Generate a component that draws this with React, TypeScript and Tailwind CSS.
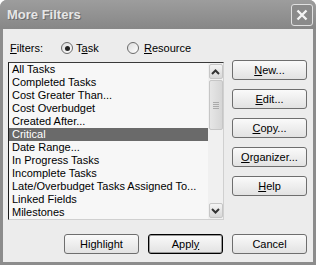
import React from "react";

const items = [
  "All Tasks",
  "Completed Tasks",
  "Cost Greater Than...",
  "Cost Overbudget",
  "Created After...",
  "Critical",
  "Date Range...",
  "In Progress Tasks",
  "Incomplete Tasks",
  "Late/Overbudget Tasks Assigned To...",
  "Linked Fields",
  "Milestones",
];

function Btn({ children, def }: { children: React.ReactNode; def?: boolean }) {
  return (
    <div
      className={
        "w-[75px] h-[20px] flex items-center justify-center rounded-[3px] text-[11px] text-black bg-gradient-to-b from-[#fafafa] to-[#e2e2e2] " +
        (def
          ? "border border-black shadow-[inset_0_0_0_1px_#9a9a9a]"
          : "border border-[#6e6e6e]")
      }
    >
      {children}
    </div>
  );
}

function Radio({ checked }: { checked?: boolean }) {
  return (
    <div className="w-[12px] h-[12px] rounded-full border border-[#6a6a6a] bg-gradient-to-br from-[#dcdcdc] to-white flex items-center justify-center">
      {checked && <div className="w-[5px] h-[5px] rounded-full bg-[#222]" />}
    </div>
  );
}

function Arrow({ up }: { up?: boolean }) {
  return (
    <div className="w-[14px] h-[15px] rounded-[2px] border border-[#c6c6c6] bg-gradient-to-b from-[#f4f4f4] to-[#d8d8d8] flex items-center justify-center">
      <svg width="9" height="6" viewBox="0 0 9 6">
        <path
          d={up ? "M1 5 L4.5 1.5 L8 5" : "M1 1 L4.5 4.5 L8 1"}
          fill="none"
          stroke="#333"
          strokeWidth="2"
        />
      </svg>
    </div>
  );
}

export default function App() {
  return (
    <div
      className="w-[316px] h-[265px] bg-[#8c8c8c] flex flex-col rounded-t-[7px] overflow-hidden"
      style={{ fontFamily: '"Liberation Sans", Arial, sans-serif' }}
    >
      <div className="h-[29px] shrink-0 flex items-center justify-between pl-[7px] pr-[3px] bg-gradient-to-b from-[#9d9d9d] to-[#878787]">
        <span className="text-[13px] font-bold text-[#e6e6e6] [text-shadow:1px_1px_0_#6a6a6a]">
          More Filters
        </span>
        <div className="w-[22px] h-[22px] rounded-[3px] border border-[#e0e0e0] bg-[#8a8a8a] flex items-center justify-center">
          <svg width="12" height="12" viewBox="0 0 12 12">
            <path d="M1.5 1.5 L10.5 10.5 M10.5 1.5 L1.5 10.5" stroke="#f4f4f4" strokeWidth="2.4" />
          </svg>
        </div>
      </div>
      <div className="flex-1 mx-[3px] mb-[3px] bg-[#ececec] flex flex-col pl-[5px] text-[11px] text-black">
        <div className="h-[14px] mt-[12px] flex items-center">
          <span className="ml-[2px] w-[51px]">
            <span className="underline">F</span>ilters:
          </span>
          <Radio checked />
          <span className="ml-[3px] w-[51px]">
            T<span className="underline">a</span>sk
          </span>
          <Radio />
          <span className="ml-[5px]">
            <span className="underline">R</span>esource
          </span>
        </div>
        <div className="flex mt-[5px]">
          <div className="mt-[2px] w-[216px] h-[158px] bg-[#f7f7f7] border border-t-[#3a3a3a] border-l-[#1a1a1a] border-r-[#d0d0d0] border-b-[#d0d0d0] flex">
            <div className="flex-1 flex flex-col">
              {items.map((t) => (
                <div
                  key={t}
                  className={
                    "h-[13px] leading-[13px] pl-[3px] whitespace-nowrap " +
                    (t === "Critical" ? "bg-[#6a6a6a] text-white" : "")
                  }
                >
                  {t}
                </div>
              ))}
            </div>
            <div className="w-[15px] h-full bg-[#f0f0f0] flex flex-col items-center pt-[1px] pb-[1px]">
              <Arrow up />
              <div className="w-[14px] h-[50px] mt-[1px] rounded-[2px] border border-[#c6c6c6] bg-gradient-to-r from-[#e6e6e6] to-[#d6d6d6] flex flex-col items-center justify-center gap-[1px]">
                <div className="w-[6px] h-[1px] bg-[#aaa]" />
                <div className="w-[6px] h-[1px] bg-[#aaa]" />
                <div className="w-[6px] h-[1px] bg-[#aaa]" />
                <div className="w-[6px] h-[1px] bg-[#aaa]" />
              </div>
              <div className="flex-1" />
              <Arrow />
            </div>
          </div>
          <div className="ml-[8px] flex flex-col gap-[9px]">
            <Btn>
              <span className="underline">N</span>ew...
            </Btn>
            <Btn>
              <span className="underline">E</span>dit...
            </Btn>
            <Btn>
              <span className="underline">C</span>opy...
            </Btn>
            <Btn>
              <span className="underline">O</span>rganizer...
            </Btn>
            <Btn>
              <span className="underline">H</span>elp
            </Btn>
          </div>
        </div>
        <div className="flex mt-[14px] gap-[9px] pl-[56px]">
          <Btn>
            Hi<span className="underline">g</span>hlight
          </Btn>
          <Btn def>
            Appl<span className="underline">y</span>
          </Btn>
          <Btn>Cancel</Btn>
        </div>
      </div>
    </div>
  );
}
